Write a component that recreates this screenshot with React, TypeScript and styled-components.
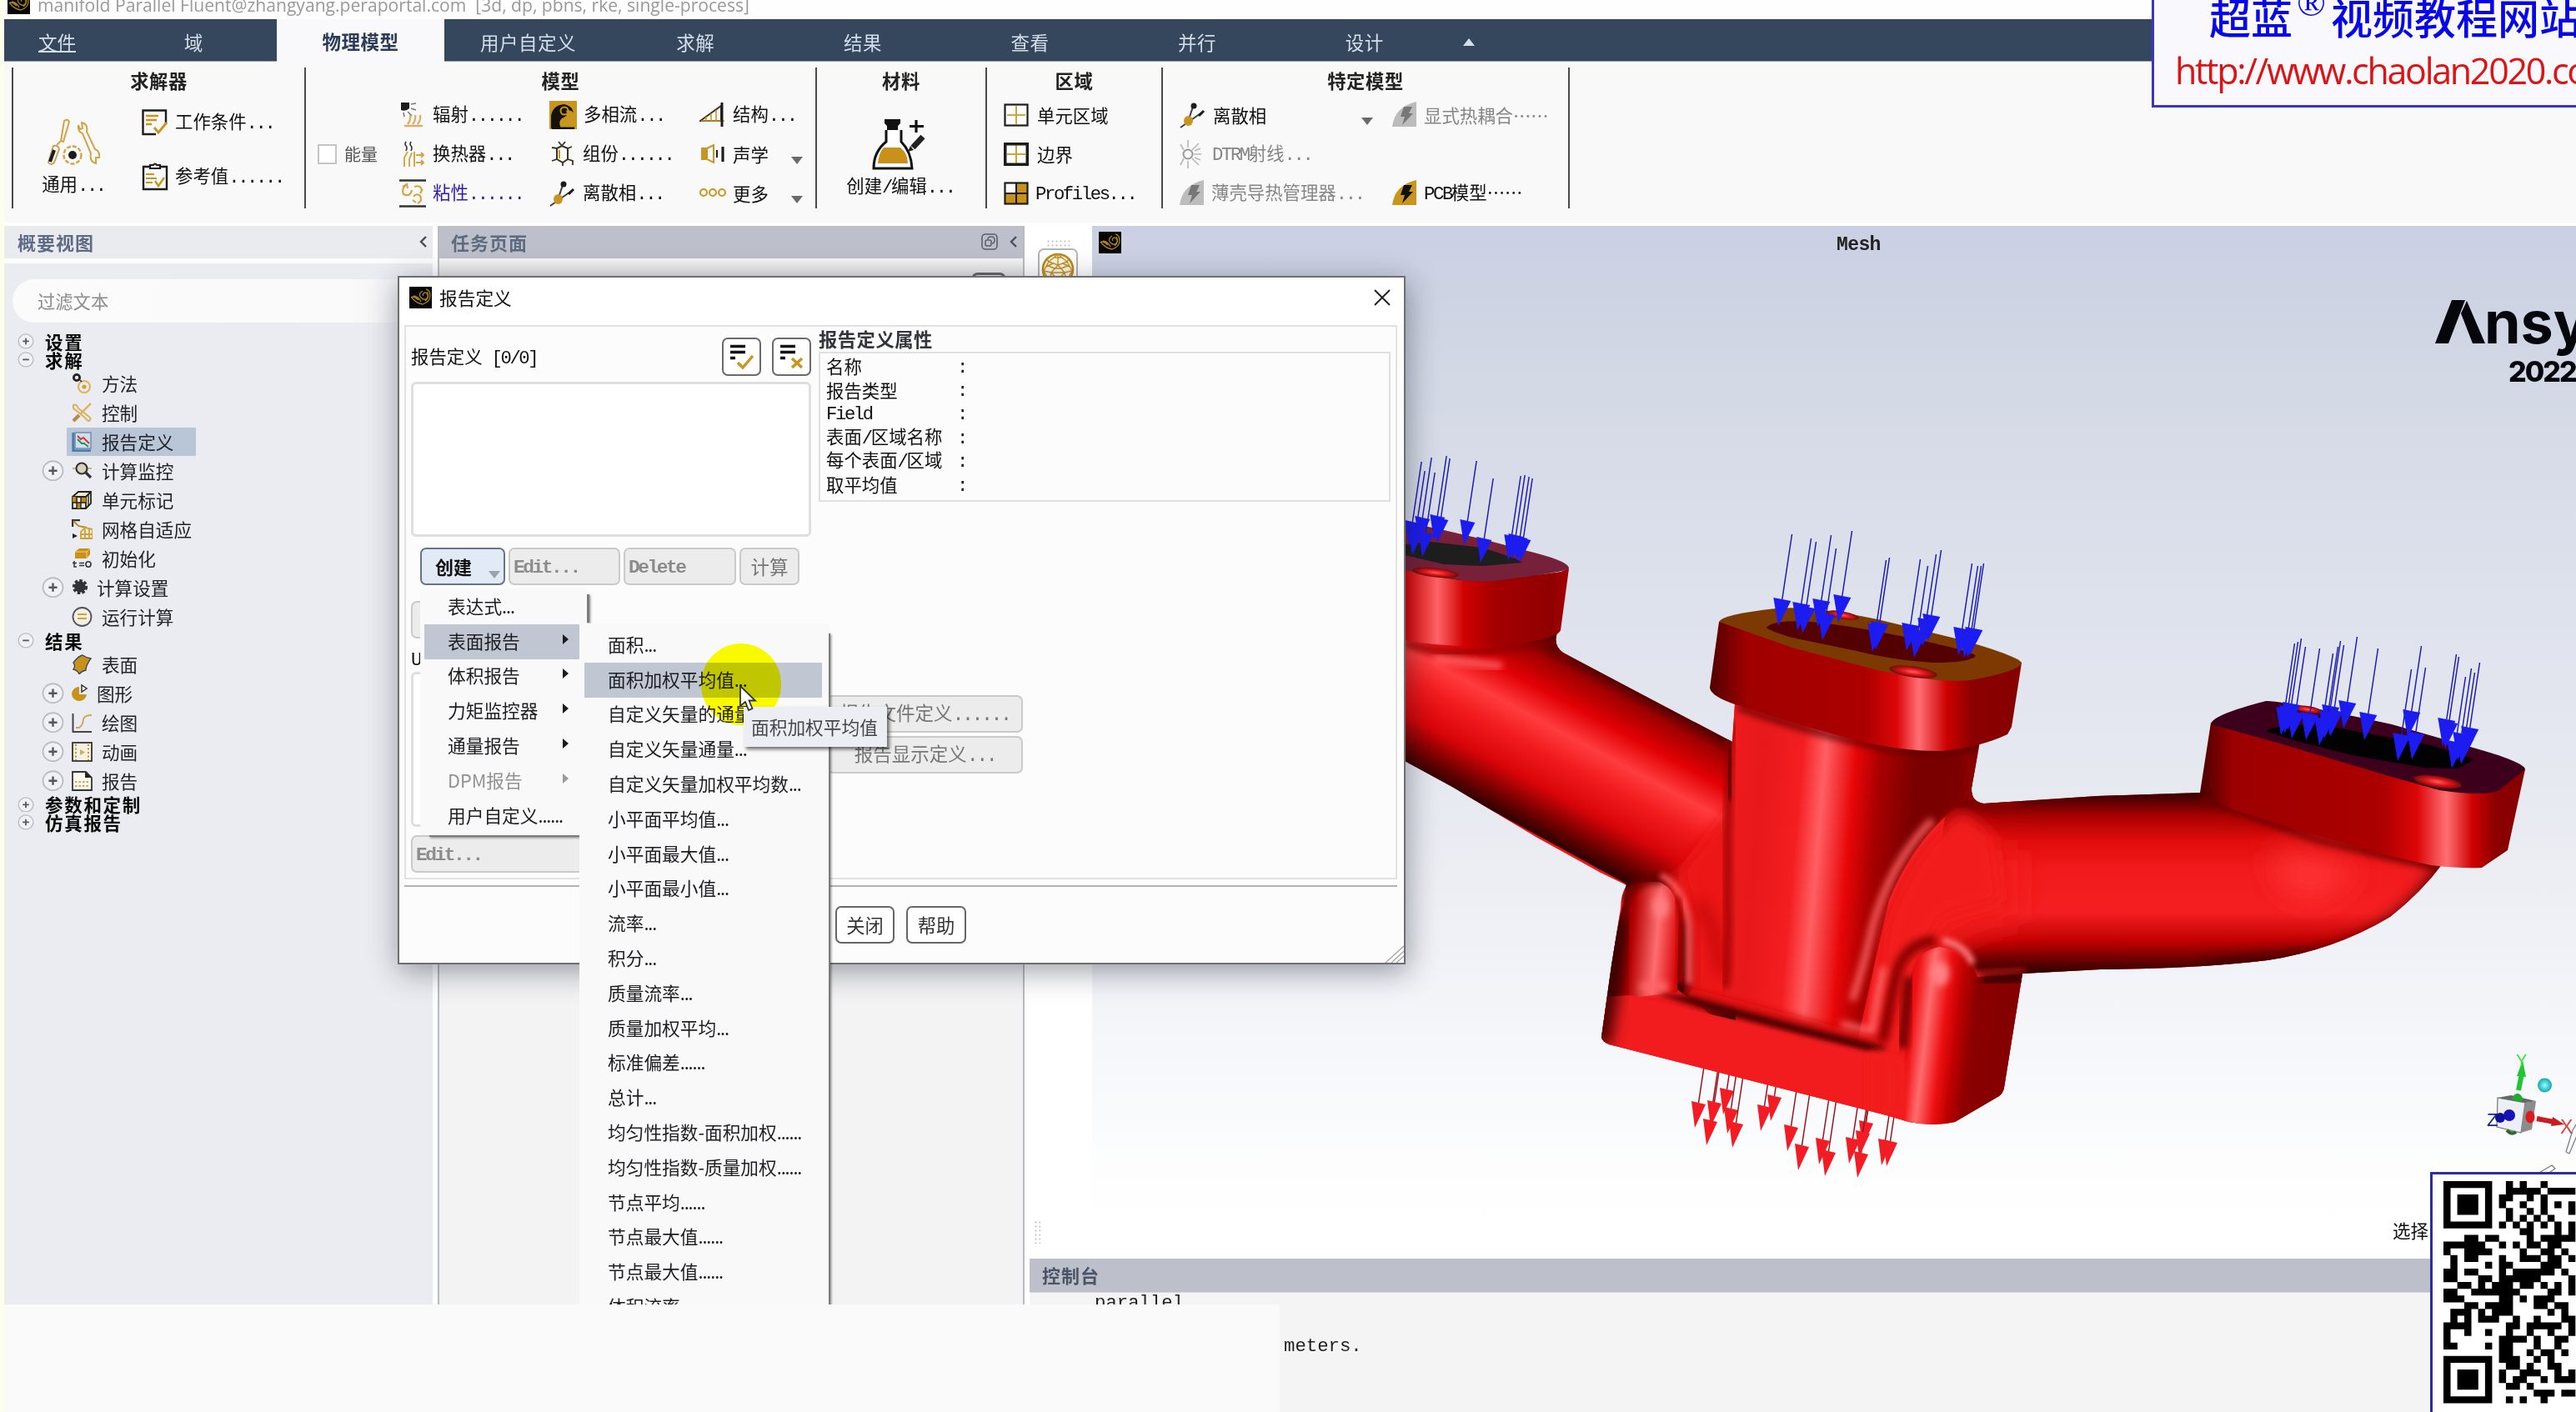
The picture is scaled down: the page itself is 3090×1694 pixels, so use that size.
import React from 'react';
import styled, { createGlobalStyle } from 'styled-components';

const GOLD = '#c8961e';
const INK = '#1c1c1c';
const CJK = '"Noto Sans CJK SC", sans-serif';

const Global = createGlobalStyle`
  * { box-sizing: border-box; }
  html, body { margin: 0; padding: 0; background: #fafafa; }
  body { font-family: "Liberation Sans", ${CJK}; }
`;

/* ---------- text ---------- */

const SongText = styled.span<{ $size?: number; $color?: string; $bold?: boolean; $gap?: number }>`
  font-family: ${CJK};
  font-size: ${p => p.$size ?? 21.4}px;
  font-weight: ${p => (p.$bold ? 700 : 400)};
  color: ${p => p.$color ?? '#111'};
  letter-spacing: ${p => p.$gap ?? 0}px;
  line-height: 24px;
  white-space: pre;
`;
const HalfWidth = styled.span`
  font-family: "Liberation Mono", monospace;
  font-size: 1.04em;
  letter-spacing: -0.108em;
`;
const MenuText = styled.span<{ $color?: string }>`
  font-family: ${CJK};
  font-size: 21.7px;
  line-height: 26px;
  color: ${p => p.$color ?? '#1d1d22'};
  white-space: pre;
`;
const Dots = styled.span`
  letter-spacing: -1.1px;
`;

type SongProps = { children: string; size?: number; color?: string; bold?: boolean; gap?: number };
const Song = ({ children, size, color, bold, gap }: SongProps) => (
  <SongText $size={size} $color={color} $bold={bold} $gap={gap}>
    {children.split(/([\x20-\x7e]+)/).map((part, i) =>
      i % 2 ? <HalfWidth key={i}>{part}</HalfWidth> : part
    )}
  </SongText>
);
const MenuLabel = ({ children, color }: { children: string; color?: string }) => (
  <MenuText $color={color}>
    {children.split(/(\.+)/).map((part, i) => (i % 2 ? <Dots key={i}>{part}</Dots> : part))}
  </MenuText>
);

/* ---------- frame ---------- */

const Page = styled.div`
  position: relative;
  width: 3090px;
  height: 1694px;
  overflow: hidden;
  display: flex;
  flex-direction: column;
  background: #fff;
  border-left: 5px solid #fdffea;
`;
const TitleBar = styled.header`
  height: 23px;
  flex: none;
  display: flex;
  align-items: flex-start;
  gap: 9px;
  padding-left: 4px;
  background: #fefefe;
  overflow: hidden;
`;
const TitleText = styled.span`
  font-family: "Open Sans", sans-serif;
  font-size: 21.1px;
  line-height: 11px;
  color: #9a9a9a;
  white-space: pre;
`;
const TitleIcon = styled.div`
  height: 17px;
  width: 27px;
  overflow: hidden;
  display: flex;
  align-items: flex-end;
`;
const MenuBar = styled.nav`
  height: 51px;
  flex: none;
  display: flex;
  background: #34475d;
  border-bottom: 1px solid #8f9bab;
`;
const Tab = styled.div<{ $w: number; $active?: boolean }>`
  width: ${p => p.$w}px;
  height: 51px;
  display: flex;
  align-items: center;
  justify-content: center;
  padding-top: ${p => (p.$active ? 0 : 3)}px;
  background: ${p => (p.$active ? '#f9f9fb' : 'transparent')};
`;
const Underlined = styled.span`
  border-bottom: 2px solid #d5deea;
  line-height: 22px;
  height: 25px;
`;
const Triangle = styled.i<{ $color: string; $up?: boolean }>`
  width: 0;
  height: 0;
  border: 7px solid transparent;
  ${p => (p.$up ? 'border-bottom' : 'border-top')}: 9px solid ${p => p.$color};
  ${p => (p.$up ? 'border-top' : 'border-bottom')}: 0;
`;

/* ---------- ribbon ---------- */

const Ribbon = styled.section`
  height: 197px;
  flex: none;
  display: flex;
  align-items: flex-start;
  padding: 7px 0 0 9px;
  background: #f9f9fa;
  border-bottom: 4px solid #fff;
`;
const Group = styled.div<{ $w: number; $first?: boolean }>`
  width: ${p => p.$w}px;
  height: 169px;
  border-right: 2px solid #4a4a4a;
  border-left: ${p => (p.$first ? '2px solid #4a4a4a' : '0')};
`;
const GroupTitle = styled.div`
  height: 33px;
  padding-bottom: 3px;
  display: flex;
  align-items: center;
  justify-content: center;
`;
const GroupBody = styled.div<{ $cols?: string; $pad?: number; $rows?: string }>`
  display: grid;
  grid-template-columns: ${p => p.$cols ?? '1fr'};
  grid-template-rows: ${p => p.$rows ?? 'repeat(3, 47px)'};
  grid-auto-flow: column;
  padding-left: ${p => p.$pad ?? 0}px;
`;
const Command = styled.div<{ $gap?: number; $w?: number }>`
  display: flex;
  align-items: center;
  gap: ${p => p.$gap ?? 8}px;
  width: ${p => (p.$w ? p.$w + 'px' : 'auto')};
  white-space: nowrap;
`;
const CaretSlot = styled.span`
  margin-left: auto;
  padding-top: 16px;
  display: flex;
`;
const BigCommand = styled.div<{ $pad: number; $shift: number }>`
  grid-row: 1 / -1;
  display: flex;
  flex-direction: column;
  align-items: center;
  gap: ${p => p.$pad}px;
  padding-top: 28px;
  padding-right: ${p => p.$shift}px;
`;
const Checkbox = styled.span`
  width: 23px;
  height: 24px;
  background: #fff;
  border: 2px solid #c4c4c4;
`;
const Blank = styled.div``;

/* ---------- docked panels ---------- */

const Workspace = styled.main`
  flex: 1;
  min-height: 0;
  display: flex;
`;
const Outline = styled.aside`
  width: 514px;
  background: #ebecf1;
`;
const PanelHeader = styled.div<{ $tone: string; $pad: number; $h: number }>`
  height: ${p => p.$h}px;
  padding: 0 6px 2px ${p => p.$pad}px;
  display: flex;
  align-items: center;
  gap: 14px;
  background: ${p => p.$tone};
`;
const Spacer = styled.span`
  flex: 1;
`;
const WhiteRule = styled.div`
  height: 6px;
  background: #fcfcfd;
`;
const Filter = styled.div`
  height: 52px;
  margin: 19px 0 12px 10px;
  padding-left: 30px;
  display: flex;
  align-items: center;
  border-radius: 26px 0 0 26px;
  background: linear-gradient(90deg, #fbfbfb 0, #fafafa 80%, #ebecf1 100%);
`;
const RootRow = styled.div`
  height: 21.7px;
  display: flex;
  align-items: center;
  padding-left: 16px;
  gap: 13px;

  ${SongText} {
    line-height: 21px;
  }
`;
const LeafRow = styled.div`
  height: 35px;
  display: flex;
  align-items: center;
`;
const ExpandSlot = styled.span`
  width: 75px;
  padding-left: 45px;
  display: flex;
`;
const Leaf = styled.span<{ $on?: boolean; $tight?: boolean }>`
  height: 34px;
  display: flex;
  align-items: center;
  gap: ${p => (p.$tight ? 5 : 11)}px;
  padding: 0 27px 0 6px;
  background: ${p => (p.$on ? '#b9c6d8' : 'transparent')};
`;
const TaskPanel = styled.section`
  width: 704px;
  margin-left: 6px;
  background: #f3f3f4;
  border-left: 2px solid #b9bbc2;
  border-right: 2px solid #b9bbc2;
  box-shadow: 0 0 0 3px #fff;
`;
const TaskBody = styled.div`
  height: 100px;
  background: linear-gradient(#f6f6f6, #e0e0e0 22px, #f3f3f4);
  padding: 17px 20px 0 0;
  display: flex;
  justify-content: flex-end;
`;
const PeekButton = styled.span`
  width: 42px;
  height: 30px;
  border: 3px solid #666;
  border-radius: 8px;
`;
const RightSide = styled.section`
  flex: 1;
  min-width: 0;
  display: flex;
  flex-direction: column;
`;
const ViewRow = styled.div`
  height: 1239px;
  flex: none;
  display: flex;
`;
const ToolColumn = styled.div`
  width: 81px;
  background: #fff;
  display: flex;
  flex-direction: column;
  align-items: center;
  padding: 16px 2px 18px 0;
`;
const DotGrip = styled.div<{ $vertical?: boolean }>`
  width: ${p => (p.$vertical ? 8 : 28)}px;
  height: ${p => (p.$vertical ? 28 : 9)}px;
  margin-right: ${p => (p.$vertical ? 50 : 0)}px;
  background: radial-gradient(circle, #c2c2c2 0.8px, transparent 1.3px) 0 0 / 5px 5px;
`;
const ToolButton = styled.div`
  margin-top: 2px;
  width: 48px;
  height: 60px;
  border: 2px solid #b4b4b4;
  border-radius: 7px;
  display: flex;
  justify-content: center;
  padding-top: 3px;
`;
const Viewport = styled.div`
  flex: 1;
  min-width: 0;
  overflow: hidden;
  background: linear-gradient(#cacfe3 0, #d3d8e5 14%, #dde1ec 35%, #e8eaf1 56%, #f4f6fa 78%, #fefefe 93%, #fff 100%);
`;
const ConsoleHead = styled.div`
  height: 41px;
  flex: none;
  margin-left: 6px;
  padding: 0 0 2px 15px;
  display: flex;
  align-items: center;
  background: #bdc0ca;
  border-bottom: 1px solid #d5d7de;
`;
const ConsoleBody = styled.div`
  flex: 1;
  background: #f4f4f4;
  margin-left: 6px;
  display: flex;
  flex-direction: column;
`;
const ConsoleLine = styled.div<{ $indent: number; $h: number }>`
  height: ${p => p.$h}px;
  padding-left: ${p => p.$indent}px;
  font-family: "Liberation Mono", monospace;
  font-size: 22.3px;
  line-height: 24px;
  color: #222;
`;

/* ---------- dialog ---------- */

const Dialog = styled.div`
  position: absolute;
  left: 472px;
  top: 331px;
  width: 1209px;
  height: 826px;
  display: flex;
  flex-direction: column;
  background: #fcfcfc;
  border: 2px solid #6e6e6e;
  box-shadow: 2px 8px 34px rgba(20, 24, 40, 0.42);
`;
const DialogTitle = styled.div`
  height: 57px;
  flex: none;
  display: flex;
  align-items: center;
  gap: 9px;
  padding: 0 16px 9px 12px;
  background: #fff;
`;
const DialogContent = styled.div`
  height: 665px;
  flex: none;
  margin: 0 8px 0 6px;
  display: flex;
  border: 2px solid #e2e2e2;
`;
const LeftPane = styled.div`
  width: 495px;
  flex: none;
  padding: 13px 9px 0 6px;
  display: flex;
  flex-direction: column;
`;
const ListHead = styled.div`
  height: 46px;
  display: flex;
  align-items: center;
  gap: 13px;
`;
const IconButton = styled.span`
  width: 47px;
  height: 46px;
  display: flex;
  align-items: center;
  justify-content: center;
  background: #fff;
  border: 2px solid #6a6a6a;
  border-radius: 7px;
`;
const ListBox = styled.div<{ $h: number; $top: number }>`
  height: ${p => p.$h}px;
  margin-top: ${p => p.$top}px;
  background: #fff;
  border: 3px solid #dfdfdf;
  border-radius: 6px;
`;
const ButtonRow = styled.div`
  display: flex;
  gap: 4px;
  padding-left: 11px;
  margin-top: 13px;
`;
const Button = styled.span<{ $w: number; $kind?: 'primary' | 'plain'; $pad?: number; $top?: number }>`
  width: ${p => p.$w}px;
  height: 45px;
  margin-top: ${p => p.$top ?? 0}px;
  padding-bottom: 2px;
  padding-left: ${p => p.$pad ?? 0}px;
  display: flex;
  align-items: center;
  justify-content: ${p => (p.$pad ? 'flex-start' : 'center')};
  border-radius: 7px;
  border: 2px solid ${p => (p.$kind === 'primary' ? '#66748a' : p.$kind === 'plain' ? '#666' : '#cacaca')};
  background: ${p => (p.$kind === 'primary' ? '#e2eaf6' : p.$kind === 'plain' ? '#fff' : '#ececec')};
`;
const ButtonCaret = styled.span`
  margin: 22px 0 0 20px;
  display: flex;
`;
const UsedIn = styled.div`
  height: 40px;
  display: flex;
  align-items: center;
  padding-top: 8px;
`;
const RightPane = styled.div`
  flex: 1;
  padding: 2px 6px 0 0;
`;
const Properties = styled.div`
  height: 180px;
  margin-top: 2px;
  padding: 1px 0 0 7px;
  border: 2px solid #e0e0e0;
`;
const PropertyRow = styled.div`
  height: 28.4px;
  display: grid;
  grid-template-columns: 157px 1fr;
  align-items: center;
`;
const ActionStack = styled.div`
  margin: 232px 0 0 10px;
  display: flex;
  flex-direction: column;
  gap: 4px;
`;
const DialogFooter = styled.div`
  flex: 1;
  margin: 7px 8px 0 6px;
  border-top: 2px solid #b2b2b2;
  padding: 23px 0 0 517px;
  display: flex;
  gap: 14px;
`;
const Grip = styled.svg`
  position: absolute;
  right: 0;
  bottom: 0;
`;

/* ---------- popups ---------- */

const Popup = styled.div<{ $x: number; $y: number; $w: number; $h: number; $pad: number }>`
  position: absolute;
  left: ${p => p.$x}px;
  top: ${p => p.$y}px;
  width: ${p => p.$w}px;
  height: ${p => p.$h}px;
  padding-top: ${p => p.$pad}px;
  overflow: hidden;
  background: #f9f9fa;
`;
const PopupShadow = styled.div<{ $x: number; $y: number; $w: number; $h: number }>`
  position: absolute;
  left: ${p => p.$x}px;
  top: ${p => p.$y}px;
  width: ${p => p.$w}px;
  height: ${p => p.$h}px;
  background: #7c7c7c;
  box-shadow: 1px 1px 3px rgba(0, 0, 0, 0.5);
`;
const MenuItem = styled.div<{ $pad: number; $ml: number; $mr: number; $on?: boolean }>`
  height: 41.8px;
  margin: 0 ${p => p.$mr}px 0 ${p => p.$ml}px;
  padding: 0 17px 2px ${p => p.$pad}px;
  display: flex;
  align-items: center;
  justify-content: space-between;
  background: ${p => (p.$on ? '#c0c6d2' : 'transparent')};
`;
const SubArrow = styled.i<{ $off?: boolean }>`
  margin-top: -4px;
  border: 6.5px solid transparent;
  border-left: 7px solid ${p => (p.$off ? '#9a9a9a' : '#1c1c1c')};
  border-right: 0;
`;
const Halo = styled.div`
  position: absolute;
  left: 836px;
  top: 772px;
  width: 96px;
  height: 98px;
  border-radius: 50%;
  background: #ffff00;
  mix-blend-mode: multiply;
`;
const Tooltip = styled.div`
  position: absolute;
  left: 887px;
  top: 848px;
  width: 172px;
  height: 48px;
  display: flex;
  align-items: center;
  padding-left: 9px;
  background: #eceef3;
  box-shadow: 3px 3px 4px rgba(0, 0, 0, 0.55);
`;
const Cursor = styled.svg`
  position: absolute;
  left: 881px;
  top: 821px;
`;
const BlankCover = styled.div`
  position: absolute;
  left: -5px;
  top: 1565px;
  width: 1535px;
  height: 129px;
  background: #fafafa;
`;
const SiteBadge = styled.div`
  position: absolute;
  left: 2576px;
  top: -14px;
  width: 560px;
  height: 143px;
  background: #f8f8fd;
  border: 3px solid #3c34c4;
  overflow: hidden;
`;
const SiteName = styled.div`
  height: 69px;
  padding: 0 0 0 66px;
  font-family: ${CJK};
  font-size: 50px;
  line-height: 60px;
  font-weight: 500;
  color: #0808e6;
  white-space: nowrap;
  display: flex;
`;
const Registered = styled.sup`
  font-family: "Liberation Serif", serif;
  font-size: 46px;
  line-height: 30px;
  width: 46px;
  text-indent: 5px;
`;
const SiteUrl = styled.div`
  padding-left: 25px;
  font-family: "Open Sans", sans-serif;
  font-size: 43px;
  line-height: 54px;
  letter-spacing: -2.3px;
  color: #dc1414;
  white-space: nowrap;
`;
const QrCard = styled.div`
  position: absolute;
  left: 2910px;
  top: 1406px;
  width: 200px;
  height: 300px;
  padding: 8px 0 0 13px;
  background: #fff;
  border: 3px solid #2a2f9e;
`;
const PickLabel = styled.div`
  position: absolute;
  left: 2865px;
  top: 1464px;
`;

/* ---------- small icons ---------- */

const Glyph = styled.svg`
  flex: none;
`;
type IconProps = { w: number; h: number; children: React.ReactNode };
const Ico = ({ w, h, children }: IconProps) => (
  <Glyph width={w} height={h} viewBox={`0 0 ${w} ${h}`} fill="none">
    {children}
  </Glyph>
);

const FluentIcon = () => (
  <Ico w={27} h={26}>
    <rect width="27" height="26" fill="#070503" />
    <path d="M2 12q6 8 14 9q9-3 9-10q0-7-5-8M3 12q4 0 8 4M5 11q6 1 9 7M16 5q-6 4-2 8t7 1q3-5-2-7q-4 1-2 4M21 6q4 6-2 11" stroke="#a8821c" strokeWidth="1.3" />
  </Ico>
);
const ToolsIcon = () => (
  <Ico w={66} h={58}>
    <path d="M22 3q4-3 6 1l-7 24l-3-1zM18 27l-5 5" stroke="#d3a445" strokeWidth="2" />
    <path d="M9 33q6-1 7 4l-6 16q-4 4-7 0z" stroke="#c9a35a" strokeWidth="2" />
    <path d="M10 38l-5 14" stroke={INK} strokeWidth="4" />
    <path d="M39 8q-1 8 5 10l10 24q-2 10 6 12l0-7 4 0q1-8-5-10l-10-21q2-9-6-11l1 7-3 1z" stroke="#d3a445" strokeWidth="2" />
    <circle cx="32" cy="44" r="10.5" stroke="#d3a445" strokeWidth="2.4" strokeDasharray="5 2" />
    <circle cx="32" cy="44" r="5" fill={INK} />
  </Ico>
);
const ConditionsIcon = () => (
  <Ico w={32} h={32}>
    <path d="M29 17V1.500H1.500V30H17" stroke={INK} strokeWidth="2.400" />
    <path d="M5 8H20M5 13H18M5 18H12" stroke={GOLD} strokeWidth="2.600" />
    <path d="M15 22l5 6 10-12" stroke={GOLD} strokeWidth="3" />
  </Ico>
);
const ReferenceIcon = () => (
  <Ico w={32} h={34}>
    <path d="M2 5H30V32H2z" stroke={INK} strokeWidth="2.400" />
    <path d="M10 7V3h4q2-3 4 0h4v4z" fill="#fff" stroke={INK} strokeWidth="2.200" />
    <path d="M5 14H15M5 19H18M5 24H13" stroke={GOLD} strokeWidth="1.800" />
    <path d="M16 22l4 6 7-10" stroke={GOLD} strokeWidth="2.400" />
  </Ico>
);
const RadiationIcon = () => (
  <Ico w={32} h={32}>
    <path d="M2 1H12V8Q8 12 2 10z" fill={INK} />
    <path d="M14 3l6-1M14 8l6 2M10 12l5 5M5 13l1 5" stroke="#777" strokeWidth="1.500" />
    <path d="M6 29H28M10 27q4-5 3-11M16 27q4-5 3-11M22 27q4-5 3-11" stroke="#dcb066" strokeWidth="2.400" />
  </Ico>
);
const ExchangerIcon = () => (
  <Ico w={32} h={32}>
    <path d="M8 1q-2 3 0 5t0 6M14 1q-2 3 0 5t0 6" stroke="#333" strokeWidth="1.600" />
    <path d="M6 31V20l4-7M12 31V22l3-8M18 31V13M20 17H29M20 26H29M26 14l3 3-3 3M26 23l3 3-3 3" stroke="#d3a445" strokeWidth="1.900" />
  </Ico>
);
const ViscousIcon = () => (
  <Ico w={32} h={34}>
    <path d="M0 1.500H32M0 32.500H32" stroke="#333" strokeWidth="2.400" />
    <path d="M8 7Q2 12 5 18q8 4 10-5M4 9l5-3 1 5M18 9q8-3 9 5M28 12l-3 5M17 21q3-5 8-1q3 6-3 9M16 25l4 3" stroke="#d3a445" strokeWidth="2.100" />
  </Ico>
);
const MultiphaseIcon = () => (
  <Ico w={33} h={34}>
    <rect width="33" height="34" fill={GOLD} />
    <path d="M2 30V18Q4 5 18 4q9 2 11 10q-4-4-9-2q4 6-5 9q-5 4-1 12H2z" fill="#15120a" />
    <circle cx="18" cy="12" r="4.500" fill="none" stroke={GOLD} strokeWidth="2" />
    <path d="M3 33H30" stroke="#15120a" strokeWidth="3" />
  </Ico>
);
const SpeciesIcon = () => (
  <Ico w={32} h={32}>
    <path d="M9 9L15 6L22 9V22L16 26L9 22z" stroke="#3a3320" strokeWidth="2" />
    <path d="M12 11v10" stroke={GOLD} strokeWidth="2" />
    <path d="M15 6L11 1M15 6l4-5M9 9L3 8M22 9l5-2M9 22l-6 2M22 22l6 2v5M16 26v4" stroke="#3a3320" strokeWidth="1.800" />
  </Ico>
);
const DiscreteIcon = () => (
  <Ico w={32} h={32}>
    <path d="M1 31L28 12M10 24L17 3" stroke="#3c3c3c" strokeWidth="2" />
    <circle cx="17" cy="5" r="3.500" fill={INK} />
    <path d="M23 17l6-6" stroke={INK} strokeWidth="3" />
    <ellipse cx="10.500" cy="23" rx="5.500" ry="6" fill={GOLD} />
  </Ico>
);
const StructureIcon = () => (
  <Ico w={32} h={32}>
    <path d="M1 23L26 5V23z" stroke="#3a3320" strokeWidth="2" />
    <path d="M8 23v-5M14 23V14M20 23V10M2 23H30" stroke={GOLD} strokeWidth="1.600" />
    <path d="M27 1V30" stroke={INK} strokeWidth="3" />
  </Ico>
);
const AcousticsIcon = () => (
  <Ico w={32} h={32}>
    <path d="M2 8H8V23H2z" fill={GOLD} />
    <path d="M9 9L17 5V26L9 22z" stroke={GOLD} strokeWidth="2" />
    <path d="M21 11V20" stroke={INK} strokeWidth="2" />
    <path d="M28 7V25" stroke={INK} strokeWidth="3.200" />
  </Ico>
);
const MoreIcon = () => (
  <Ico w={32} h={32}>
    <circle cx="5" cy="15" r="4" stroke={GOLD} strokeWidth="2" />
    <circle cx="16" cy="15" r="4" stroke={GOLD} strokeWidth="2" />
    <circle cx="27" cy="15" r="4" stroke={GOLD} strokeWidth="2" />
  </Ico>
);
const FlaskIcon = () => (
  <Ico w={68} h={62}>
    <path d="M15 1H34V6L31 9V14H18V9L15 6z" fill="#111" />
    <path d="M17 14V28Q2 40 2 60H48Q47 40 35 28V14" fill="#fff" stroke="#111" strokeWidth="3" />
    <path d="M14 35H34Q43 42 43 54H7Q8 42 14 35z" fill="#c8921a" />
    <path d="M53 2V17M45 9.500H62" stroke="#111" strokeWidth="3.200" />
    <path d="M49 35L61 22" stroke="#222" strokeWidth="7" />
    <path d="M43 40l3-7 4 5z" fill="#222" />
  </Ico>
);
const GridIcon = ({ kind }: { kind: 'zone' | 'boundary' | 'profile' }) => (
  <Ico w={30} h={28}>
    <rect x="1.500" y="1.500" width="27" height="25" fill="#fff" />
    {kind === 'profile' && <path d="M15 1H29V27H1V14H15z" fill="#c8921a" />}
    <path d={kind === 'profile' ? 'M15 2V26M2 14H28' : 'M15 3V25M4 14H26'} stroke={kind === 'profile' ? INK : '#d0a63c'} strokeWidth="2" />
    <rect x="1.500" y="1.500" width="27" height="25" stroke={INK} strokeWidth={kind === 'boundary' ? 4 : 2.200} />
  </Ico>
);
const RaysIcon = () => (
  <Ico w={31} h={34}>
    <circle cx="10" cy="17" r="5.500" stroke="#999" strokeWidth="2" />
    <path d="M10 9V0M10 25v9M15 12l8-8M15 22l8 8M17 17H26M5 12L1 5M5 22l-4 8M18 13l7-3M18 21l7 3" stroke="#b9b9b9" strokeWidth="1.700" />
  </Ico>
);
const BoltIcon = ({ on }: { on?: boolean }) => (
  <Ico w={30} h={31}>
    <path d="M0 30Q3 6 29 0V30z" fill={on ? GOLD : '#bcbcbc'} />
    <path d="M14 6H24L20 14H25L12 28L15 18H10z" fill={on ? '#111' : '#777'} />
  </Ico>
);
const Expander = ({ size, plus }: { size: number; plus?: boolean }) => (
  <Glyph width={size} height={size * 0.94} viewBox="0 0 26 25">
    <ellipse cx="13" cy="12.500" rx="11.800" ry="11.300" fill="#f0f1f4" stroke="#b9bcc2" strokeWidth="1.800" />
    <path d={plus ? 'M8 12.500H18M13 7.500V17.500' : 'M8 12.500H18'} stroke="#55585e" strokeWidth="2.400" />
  </Glyph>
);
const ChevronLeft = () => (
  <Ico w={10} h={18}>
    <path d="M8 3L2 9L8 15" stroke="#4a4f58" strokeWidth="2.400" />
  </Ico>
);
const FloatIcon = () => (
  <Ico w={20} h={20}>
    <rect x="1" y="1" width="18" height="18" rx="4" stroke="#5a606b" strokeWidth="1.600" />
    <rect x="5" y="8" width="7" height="7" rx="2" stroke="#5a606b" strokeWidth="1.500" />
    <path d="M8 7q0-3 4-3q4 0 4 4q0 4-3 4" stroke="#5a606b" strokeWidth="1.500" />
  </Ico>
);
const MeshBall = () => (
  <Ico w={40} h={40}>
    <circle cx="20" cy="20" r="18" fill="#fdf6e2" stroke="#b98a1d" strokeWidth="2.600" />
    <path d="M20 2L9 11L20 15L31 11zM9 11L3 22L12 24L20 15L28 24L37 22L31 11M12 24L20 33L28 24zM3 22L10 34L12 24M37 22L30 34L28 24M10 34L20 33L30 34M7 8l2 3M33 8l-2 3M12 24H28M20 2V15M14 13L6 17M26 13L34 17M15 6L25 6M16 19H24M6 15L16 19M34 15L24 19" stroke="#c2922a" strokeWidth="1.400" />
  </Ico>
);
const ListCheck = ({ cross }: { cross?: boolean }) => (
  <Ico w={32} h={32}>
    <path d="M2 3.500H20M2 10.500H20M2 17.500H8" stroke="#111" strokeWidth="3.600" />
    {cross ? (
      <path d="M16 18L28 29M28 18L16 29" stroke={GOLD} strokeWidth="3.600" />
    ) : (
      <path d="M11 23L17 29L29 15" stroke={GOLD} strokeWidth="3.400" />
    )}
  </Ico>
);

const treeIcons: Record<string, React.ReactNode> = {
  method: (
    <>
      <circle cx="6" cy="5" r="3.600" stroke="#222" strokeWidth="2.800" />
      <circle cx="15" cy="16" r="7" stroke="#e0b35c" strokeWidth="2.200" />
      <circle cx="15" cy="16" r="2.600" fill="#d79f2c" />
      <path d="M10 8l2 2" stroke="#222" strokeWidth="1.500" />
    </>
  ),
  control: (
    <>
      <path d="M2 3q4-2 6 4l13 10q3 2 0 5q-3 0-4-3L5 9q-4-1-3-6z" stroke="#dcae56" strokeWidth="1.900" />
      <path d="M23 1L10 14" stroke="#dcae56" strokeWidth="2.400" />
      <path d="M9 15L2 22" stroke="#b58a45" strokeWidth="4" />
    </>
  ),
  report: (
    <>
      <path d="M2 1V23H23" stroke="#4c7fae" strokeWidth="3.400" />
      <rect x="4" y="1" width="19" height="19" fill="#d4dee9" stroke="#6d8fb3" strokeWidth="1.500" />
      <path d="M7 5l4 4 3-2 7 7" stroke="#c33" strokeWidth="1.800" />
      <path d="M7 9l5 5 3 0 5 4" stroke="#2a8f5a" strokeWidth="1.800" />
    </>
  ),
  monitor: (
    <>
      <path d="M1 9H24" stroke="#c9a35a" strokeWidth="1.500" />
      <circle cx="12" cy="9" r="6.500" fill="#d9d2c0" stroke="#333" strokeWidth="2.200" />
      <path d="M17 14l6 6" stroke="#333" strokeWidth="3.200" />
    </>
  ),
  cell: (
    <>
      <path d="M1 8L8 2H23V16L17 22H1z" fill="#f4ead0" stroke="#222" strokeWidth="1.800" />
      <path d="M1 8H17V22M17 8L23 2" stroke="#222" strokeWidth="1.800" />
      <path d="M1 8H7V15H1zM11 9H17V15H11zM6 15H11V22H6z" fill="#b98a1d" />
      <path d="M6 8V22M11 8V22M1 15H17M20 5V19" stroke="#222" strokeWidth="1.400" />
    </>
  ),
  adapt: (
    <>
      <path d="M1 9V1H10" stroke="#333" strokeWidth="2.400" />
      <path d="M2 2L8 8L18 10" stroke="#b98a1d" strokeWidth="1.800" />
      <path d="M1 17l6 3-6 3z" fill="#222" />
      <path d="M11 23V15L16 10L25 12V23H11zM11 18H25M16 12V23M21 12V23" stroke="#d79f2c" strokeWidth="1.800" />
    </>
  ),
  init: (
    <>
      <path d="M4 4L9 0H22V7L18 12H4z" fill="#c8921a" />
      <path d="M4 4H18V12M18 4l4-4" stroke="#f3d58a" strokeWidth="1" />
      <path d="M3 15V22H6M1 17.500H6M9 17.500H15M9 20.500H15" stroke="#333" strokeWidth="1.500" />
      <ellipse cx="20" cy="19" rx="3" ry="3.200" stroke="#333" strokeWidth="1.600" />
    </>
  ),
  gear: (
    <>
      <circle cx="10" cy="11" r="7.600" stroke="#2f3238" strokeWidth="3" strokeDasharray="3.600 2.200" />
      <circle cx="10" cy="11" r="6.800" fill="#2f3238" />
    </>
  ),
  run: (
    <>
      <circle cx="12.500" cy="12" r="11" fill="#f3efe2" stroke="#4d545e" strokeWidth="1.800" />
      <path d="M7 9H18M7 14H18" stroke="#d0a63c" strokeWidth="2" />
    </>
  ),
  surface: (
    <path d="M2 10Q8 2 13 1Q17 4 23 5Q17 13 17 19Q12 20 9 24Q7 19 2 18Q5 14 2 10z" fill="#c8921a" stroke="#3c4658" strokeWidth="1.300" />
  ),
  graphics: (
    <>
      <path d="M9 4A9 8.500 0 1 0 18 13H9z" fill="#c8921a" />
      <path d="M12 2V10L18 6z" fill="#fff" stroke="#333" strokeWidth="1.500" />
    </>
  ),
  plot: (
    <>
      <path d="M1.500 1V23H24" stroke="#444" strokeWidth="2" />
      <path d="M5 18H9Q13 16 14 8Q15 3 24 3" stroke="#c8a95a" strokeWidth="2" />
    </>
  ),
  anim: (
    <>
      <rect x="1" y="1" width="23" height="22" fill="#f6f1e0" stroke="#333" strokeWidth="1.800" />
      <path d="M5 3V22M20 3V22" stroke="#b98a1d" strokeWidth="1.800" strokeDasharray="2 2.500" />
      <path d="M10 9l6 3.500-6 3.500z" fill="#c8b060" />
    </>
  ),
  doc: (
    <>
      <path d="M1 1H17L24 8V23H1z" fill="#faf7ec" stroke="#333" strokeWidth="1.800" />
      <path d="M16 1V8H24z" fill="#222" />
      <path d="M4 13H21M4 18H21" stroke="#c8a95a" strokeWidth="1.800" strokeDasharray="2.500 2" />
    </>
  ),
};

/* ---------- 3D scene ---------- */

type Pt = [number, number];
const inletArrows: Pt[] = [
  [2133, 751], [2162, 760], [2156, 756], [2186, 768], [2205, 747], [2180, 752], [2246, 782], [2250, 779], [2287, 781], [2296, 789],
  [2312, 770], [2306, 775], [2349, 786], [2356, 789], [2360, 789], [2363, 786],
  [1694, 666], [1706, 668], [1690, 655], [1702, 650], [1724, 651], [1720, 648], [1756, 654], [1776, 675], [1809, 672], [1814, 671], [1823, 675], [1819, 673],
  [2736, 882], [2740, 880], [2749, 886], [2766, 888], [2782, 894], [2791, 879], [2795, 884], [2811, 874], [2836, 888], [2876, 913],
  [2888, 885], [2893, 911], [2930, 895], [2933, 898], [2941, 922], [2952, 917], [2948, 912], [2958, 905], [2744, 876], [2788, 886],
];
const outletArrows: Pt[] = [
  [2033, 1353], [2047, 1374], [2052, 1352], [2067, 1337], [2072, 1360], [2078, 1377], [2112, 1357], [2124, 1345], [2144, 1381],
  [2157, 1404], [2182, 1397], [2189, 1411], [2218, 1396], [2228, 1413], [2234, 1376], [2230, 1388], [2257, 1398], [2263, 1399],
];
const Arrow = ({ p, len, half, head, color, shaft }: { p: Pt; len: number; half: number; head: number; color: string; shaft: string }) => {
  const [x, y] = p;
  const k = 0.15;
  return (
    <g>
      <path d={`M${x + len * k} ${y - len}L${x + head * k} ${y - head}`} stroke={shaft} strokeWidth="1.500" />
      <path d={`M${x} ${y}L${x + head * k - half} ${y - head - 2}L${x + head * k + half} ${y - head + 2}z`} fill={color} />
    </g>
  );
};

const BODY =
  'M1685 684V913L1742 944L1844 1005L1920 1047L1951 1062Q1944 1074 1944 1090L1933 1158L1921 1244Q1921 1249 1930 1253L2263 1338L2290 1346Q2320 1352 2345 1346L2398 1315Q2403 1311 2404 1305L2426 1168L2520 1163Q2640 1162 2720 1152Q2800 1140 2867 1100Q2905 1070 2930 1036L2850 950L2638 951L2515 955L2380 964Q2364 962 2365 945L2375 890L2081 844L2078 890L1960 828L1875 783Q1864 775 1867 763L1878 690z';

const Scene = () => (
  <svg width="1780" height="1239" viewBox="1310 271 1780 1239" fill="none">
    <defs>
      <linearGradient id="pipeL" gradientUnits="userSpaceOnUse" x1="1978" y1="832" x2="1876" y2="1022">
        <stop offset="0" stopColor="#3a0000" /><stop offset=".1" stopColor="#a00000" /><stop offset=".26" stopColor="#e20004" />
        <stop offset=".42" stopColor="#ff3c3e" /><stop offset=".56" stopColor="#f21c1e" /><stop offset=".74" stopColor="#d80508" />
        <stop offset=".9" stopColor="#6a0000" /><stop offset="1" stopColor="#240000" />
      </linearGradient>
      <linearGradient id="pipeR" gradientUnits="userSpaceOnUse" x1="0" y1="953" x2="0" y2="1168">
        <stop offset="0" stopColor="#3a0000" /><stop offset=".12" stopColor="#a80000" /><stop offset=".26" stopColor="#e00c0c" />
        <stop offset=".42" stopColor="#f21a1c" /><stop offset=".66" stopColor="#f41e20" /><stop offset=".82" stopColor="#c00000" />
        <stop offset="1" stopColor="#2c0000" />
      </linearGradient>
      <linearGradient id="neck" gradientUnits="userSpaceOnUse" x1="2072" y1="0" x2="2375" y2="26">
        <stop offset="0" stopColor="#4a0000" /><stop offset=".07" stopColor="#c80000" /><stop offset=".16" stopColor="#f41e20" />
        <stop offset=".4" stopColor="#e8181a" /><stop offset=".55" stopColor="#f41e20" /><stop offset=".64" stopColor="#ff6064" />
        <stop offset=".76" stopColor="#e80608" /><stop offset=".86" stopColor="#a80000" /><stop offset="1" stopColor="#7a0000" />
      </linearGradient>
      <linearGradient id="collarL" gradientUnits="userSpaceOnUse" x1="1685" y1="0" x2="1882" y2="0">
        <stop offset="0" stopColor="#d80000" /><stop offset=".2" stopColor="#ff6468" /><stop offset=".36" stopColor="#d00000" />
        <stop offset=".55" stopColor="#a40000" /><stop offset=".9" stopColor="#900000" /><stop offset="1" stopColor="#a80000" />
      </linearGradient>
      <linearGradient id="collarM" gradientUnits="userSpaceOnUse" x1="2051" y1="0" x2="2425" y2="0">
        <stop offset="0" stopColor="#500000" /><stop offset=".12" stopColor="#a00000" /><stop offset=".5" stopColor="#ac0000" />
        <stop offset=".6" stopColor="#dc0608" /><stop offset=".67" stopColor="#ff7074" /><stop offset=".76" stopColor="#cc0000" />
        <stop offset=".84" stopColor="#8c0000" /><stop offset="1" stopColor="#860000" />
      </linearGradient>
      <linearGradient id="collarR" gradientUnits="userSpaceOnUse" x1="2639" y1="0" x2="3028" y2="0">
        <stop offset="0" stopColor="#480000" /><stop offset=".1" stopColor="#9c0000" /><stop offset=".56" stopColor="#ac0000" />
        <stop offset=".67" stopColor="#dc0608" /><stop offset=".76" stopColor="#ff7074" /><stop offset=".84" stopColor="#d00000" />
        <stop offset=".91" stopColor="#8c0000" /><stop offset="1" stopColor="#860000" />
      </linearGradient>
      <linearGradient id="postL" gradientUnits="userSpaceOnUse" x1="1938" y1="1100" x2="2016" y2="1107">
        <stop offset="0" stopColor="#3c0000" /><stop offset=".28" stopColor="#b40000" /><stop offset=".66" stopColor="#ff6e70" />
        <stop offset="1" stopColor="#d80406" />
      </linearGradient>
      <linearGradient id="postR" gradientUnits="userSpaceOnUse" x1="2278" y1="1200" x2="2412" y2="1216">
        <stop offset="0" stopColor="#d00406" /><stop offset=".14" stopColor="#f01214" /><stop offset=".27" stopColor="#ff6c6e" />
        <stop offset=".42" stopColor="#ee1012" /><stop offset=".54" stopColor="#c00000" /><stop offset=".68" stopColor="#8c0000" />
        <stop offset="1" stopColor="#840000" />
      </linearGradient>
      <radialGradient id="bolt"><stop offset="0" stopColor="#ff5c5e" /><stop offset=".5" stopColor="#e01418" /><stop offset="1" stopColor="#700c08" /></radialGradient>
      <radialGradient id="cyan"><stop offset="0" stopColor="#9ff" /><stop offset="1" stopColor="#10a8b0" /></radialGradient>
      <filter id="b3" x="-50%" y="-50%" width="200%" height="200%"><feGaussianBlur stdDeviation="3" /></filter>
      <filter id="b4" x="-50%" y="-50%" width="200%" height="200%"><feGaussianBlur stdDeviation="4.500" /></filter>
      <filter id="b9" x="-50%" y="-50%" width="200%" height="200%"><feGaussianBlur stdDeviation="9" /></filter>
      <filter id="b18" x="-50%" y="-50%" width="200%" height="200%"><feGaussianBlur stdDeviation="18" /></filter>
      <clipPath id="bodyClip"><path d={BODY} /></clipPath>
    </defs>

    <g transform="translate(1318 278)">
      <FluentIcon />
    </g>
    <text x="2203" y="300" fontFamily="Liberation Mono, monospace" fontWeight="700" fontSize="23" letterSpacing="-0.6" fill="#222">Mesh</text>

    {outletArrows.map((p, i) => (
      <Arrow key={i} p={p} len={100} half={8.500} head={30} color="#f21c24" shaft="#9a1018" />
    ))}

    <g clipPath="url(#bodyClip)">
      <rect x="1685" y="640" width="1300" height="760" fill="#ee181a" />
      <path d="M1685 690L1880 690L2082 890V1240L1950 1140V1060L1685 915z" fill="url(#pipeL)" />
      <path d="M1996 1062L2020 1040L2080 980V1210H2026L2024 1110z" fill="#ea1416" filter="url(#b9)" />
      <path d="M2016 1046L2084 960V1206H2034V1100z" fill="#ec1618" filter="url(#b9)" />
      <path d="M2340 940H2990V1180H2300z" fill="url(#pipeR)" />
      <path d="M2372 1020Q2330 1050 2290 1110L2250 1240L2310 1160L2366 1120L2420 1106V1020z" fill="#f21c1e" filter="url(#b18)" />
      <path d="M2074 840H2380L2366 955Q2300 996 2266 1080L2250 1150L2228 1250L2070 1206z" fill="url(#neck)" />
      <path d="M2352 972Q2290 1030 2262 1110L2246 1240L2280 1180L2330 1100L2400 1080L2390 1000z" fill="#f21c1e" filter="url(#b9)" />
      <path d="M2362 900V956Q2372 966 2420 964" stroke="#8a0000" strokeWidth="16" filter="url(#b4)" />
      <path d="M2078 866Q2070 980 2073 1110L2070 1186" stroke="#9a0000" strokeWidth="8" filter="url(#b4)" />
      <path d="M2076 870L2074 960" stroke="#4a0000" strokeWidth="9" filter="url(#b4)" />
      <path d="M2036 1080Q2058 1110 2066 1170" stroke="#b80000" strokeWidth="10" filter="url(#b9)" />
      <path d="M2318 984Q2268 1034 2246 1112Q2238 1150 2222 1200" stroke="#ff6264" strokeWidth="8" filter="url(#b4)" />

      <path d="M1951 1066Q1966 1056 1990 1058Q2012 1066 2014 1100L2012 1190L1966 1196L1921 1262L1915 1230z" fill="url(#postL)" />
      <path d="M1947 1080Q1962 1052 1996 1056" stroke="#6a0000" strokeWidth="10" filter="url(#b4)" />
      <path d="M1992 1050Q2020 1062 2026 1110V1180" stroke="#ff6264" strokeWidth="6" filter="url(#b3)" />
      <path d="M2012 1076Q2018 1100 2016 1180" stroke="#b40000" strokeWidth="7" filter="url(#b3)" />
      <ellipse cx="1992" cy="1088" rx="10" ry="14" fill="#ff7e80" filter="url(#b4)" />
      <ellipse cx="1984" cy="1184" rx="18" ry="7" fill="#ff6466" filter="url(#b4)" />

      <path d="M2030 1186L2250 1244L2262 1262L2020 1200z" fill="#d80a0c" filter="url(#b4)" />
      <path d="M1956 1194L2285 1272L2310 1366L1900 1264L1915 1196z" fill="#f21c1e" />
      <path d="M1942 1100L1930 1190L1919 1254" stroke="#3c0000" strokeWidth="24" filter="url(#b9)" />
      <path d="M1986 1192L2030 1196L2150 1228L2262 1256L2280 1270L2150 1238L2050 1212z" fill="#4a0000" filter="url(#b3)" />

      <path d="M2240 1262L2262 1258L2290 1180Q2290 1142 2326 1136Q2356 1140 2370 1166L2430 1164L2412 1350H2240z" fill="#f21c1e" filter="url(#b4)" />
      <path d="M2284 1274L2290 1184Q2292 1142 2326 1136Q2360 1140 2372 1172L2440 1168L2410 1352H2286z" fill="url(#postR)" />
      <path d="M2262 1264L2286 1272V1342L2262 1336z" fill="#f21c1e" filter="url(#b3)" />
      <path d="M2322 1128Q2280 1132 2272 1180L2258 1250" stroke="#8e0000" strokeWidth="13" filter="url(#b4)" />
      <path d="M2290 1172L2282 1258" stroke="#700000" strokeWidth="12" filter="url(#b4)" />
      <path d="M2208 1228Q2228 1234 2246 1236Q2250 1200 2260 1160" stroke="#ff6e70" strokeWidth="7" filter="url(#b4)" />
      <path d="M2378 1176L2430 1172L2620 1168" stroke="#3a0000" strokeWidth="12" filter="url(#b4)" />
      <path d="M2330 1128Q2358 1134 2366 1156" stroke="#ff7476" strokeWidth="8" filter="url(#b3)" />
      <ellipse cx="2327" cy="1168" rx="11" ry="15" fill="#ff8284" filter="url(#b4)" />

      <path d="M1685 772Q1740 790 1805 778L1870 770L1880 792" stroke="#8a0000" strokeWidth="7" filter="url(#b4)" />
      <path d="M1720 790L1802 799" stroke="#ff6264" strokeWidth="8" filter="url(#b4)" />
      <path d="M2084 848Q2230 900 2330 904L2376 896" stroke="#600000" strokeWidth="7" filter="url(#b4)" />
      <path d="M2640 955L2780 1008L2925 1040" stroke="#700000" strokeWidth="9" filter="url(#b4)" />
      <path d="M2935 1040Q2890 1120 2790 1150L2640 1166" stroke="#400000" strokeWidth="22" filter="url(#b9)" />
      <path d="M2730 1020Q2800 1030 2830 1044L2780 1080Q2720 1070 2730 1020z" fill="#ff3436" filter="url(#b18)" />
    </g>

    <path d="M1685 684L1716 691L1752 696L1793 697L1872 686L1882 682L1872 756Q1868 768 1803 774Q1740 778 1685 768z" fill="url(#collarL)" />
    <path d="M1685 626L1732 636L1779 647L1844 664Q1882 674 1882 682Q1880 686 1793 697Q1752 700 1685 684z" fill="#76203a" />
    <path d="M1685 653L1716 650L1778 657L1818 670L1826 675L1778 679L1732 677L1685 666z" fill="#1e1e1e" />
    <ellipse cx="1722" cy="687" rx="28" ry="5.500" fill="url(#bolt)" transform="rotate(6 1722 687)" />

    <path d="M2062 746L2051 825Q2052 835 2081 845L2150 867L2222 887Q2283 902 2329 901Q2374 897 2408 881L2413 872L2425 795z" fill="url(#collarM)" />
    <path d="M2062 746Q2066 737 2130 730Q2170 726 2252 743L2354 768Q2420 787 2425 795Q2424 805 2364 816Q2324 820 2252 804L2150 777z" fill="#7c3a02" />
    <path d="M2119 753Q2124 745 2160 745Q2211 748 2303 768Q2368 782 2370 787Q2362 795 2320 795Q2270 792 2227 781L2150 765Q2122 757 2119 753z" fill="#540000" />
    <ellipse cx="2295" cy="806" rx="29" ry="6.500" fill="url(#bolt)" transform="rotate(8 2295 806)" />
    <ellipse cx="2210" cy="738" rx="20" ry="4.500" fill="url(#bolt)" transform="rotate(10 2210 738)" />

    <path d="M2652 867L2639 951Q2660 962 2680 972L2775 1001L2850 1023L2916 1038Q2950 1042 2977 1041L3008 1020L3029 923z" fill="url(#collarR)" />
    <path d="M2652 869Q2652 858 2718 841Q2735 840 2869 869L2963 896Q3028 914 3029 923L2998 948Q2980 956 2926 948L2869 932L2728 890z" fill="#3c001c" />
    <path d="M2718 877Q2735 866 2803 873L2916 894L2968 911L2949 922L2907 921L2822 906L2751 888z" fill="#020202" />
    <ellipse cx="2924" cy="938" rx="29" ry="7" fill="url(#bolt)" transform="rotate(9 2924 938)" />
    <ellipse cx="2768" cy="851" rx="18" ry="4" fill="url(#bolt)" transform="rotate(9 2768 851)" />

    {inletArrows.map((p, i) => (
      <Arrow key={i} p={p} len={p[0] < 1900 ? 101 : 110} half={p[0] < 1900 ? 9 : 10.500} head={p[0] < 1900 ? 29 : 32} color="#1c1cf0" shaft="#1c1cae" />
    ))}

    <g>
      <path d="M2921 412L2941 360H2957L2937 412z" fill="#05070c" />
      <path d="M2959 361L2981 412H2966L2952 376z" fill="#05070c" />
      <text x="2980" y="412" fontFamily="Inter, sans-serif" fontWeight="700" fontSize="70" fill="#05070c">nsys</text>
      <text x="3009" y="458" fontFamily="Inter, sans-serif" fontWeight="800" fontSize="34" letterSpacing="-2" fill="#05070c">2022</text>
    </g>

    <g>
      <path d="M2996 1317L3029 1323L3024 1359L2995 1352z" fill="#eeeef8" stroke="#777" strokeWidth="1.200" />
      <path d="M3029 1323L3042 1321L3037 1355L3024 1359z" fill="#8c8c8c" />
      <path d="M2996 1317L3012 1314L3042 1321L3029 1323z" fill="#666" />
      <path d="M3013 1318q7-13 14 1q-7 5-14-1z" fill="#1fae2c" />
      <path d="M3007 1356q6 6 11 2" stroke="#2c6a30" strokeWidth="4" />
      <path d="M3021 1308L3025 1288" stroke="#22c436" strokeWidth="6" />
      <path d="M3019 1291L3026 1272L3030 1292z" fill="#22c436" />
      <text x="3018" y="1279" fontFamily="Liberation Sans, sans-serif" fontSize="20" fill="#2ee83a">Y</text>
      <circle cx="3052.500" cy="1302" r="8.500" fill="url(#cyan)" />
      <ellipse cx="3035" cy="1340" rx="5.500" ry="7.500" fill="#d81c20" />
      <path d="M3043 1342L3064 1346" stroke="#c81c20" strokeWidth="6" />
      <path d="M3062 1340L3076 1349L3060 1351z" fill="#c81c20" />
      <text x="3071" y="1360" fontFamily="Liberation Sans, sans-serif" fontSize="23" fill="#e04040">X</text>
      <text x="2983" y="1351" fontFamily="Liberation Sans, sans-serif" fontSize="22" fill="#1818a0">Z</text>
      <circle cx="2999" cy="1341" r="6" fill="#10109a" />
      <circle cx="3010" cy="1338" r="7" fill="#1414b8" />
      <path d="M3078 1382L3086 1356L3092 1346M3082 1384L3092 1360M3078 1382L3082 1384" stroke="#777" strokeWidth="1.200" />
      <path d="M3044 1408L3061 1398L3065 1402L3056 1408" stroke="#777" strokeWidth="1.200" />
    </g>
  </svg>
);

/* ---------- QR ---------- */

const FINDER = ['#######', '#.....#', '#.###.#', '#.###.#', '#.###.#', '#.....#', '#######'];
const qrCells: number[][] = [
  [9, 11, 14], [9, 10, 11, 12, 13, 15, 16, 17, 18], [8, 9, 12, 14], [8, 11, 14, 16, 18], [9, 12, 14, 18], [9, 11, 13, 15],
  [8, 10, 12, 14, 16, 18], [11, 12, 16, 18], [3, 4, 6, 7, 12, 14, 15, 16, 17, 18], [0, 1, 2, 3, 4, 5, 8, 10, 12, 13, 15, 16],
  [0, 3, 4, 5, 6, 11, 14, 15, 17], [1, 3, 4, 8, 11, 12, 13, 15, 16, 18], [1, 6, 8, 9, 14, 15, 16], [0, 1, 3, 4, 8, 10, 11, 12, 13, 14, 15, 17],
  [0, 1, 5, 6, 8, 9, 10, 11, 12, 13, 18], [2, 3, 5, 7, 8, 9, 11, 12, 14, 16, 18], [0, 1, 4, 5, 6, 7, 8, 9, 10, 15, 16, 18],
  [0, 1, 2, 8, 9, 11, 13, 14, 15], [3, 4, 6, 7, 8, 9, 13, 14, 16, 17], [1, 2, 3, 5, 7, 8, 9, 15, 17], [1, 3, 5, 6, 7, 10, 13, 17, 18],
  [0, 1, 2, 3, 9, 10, 12, 13, 14, 15, 16, 18], [0, 3, 6, 9, 12, 15, 18], [0, 8, 9, 10, 11, 13, 16, 17], [0, 1, 6, 8, 9, 13, 16],
  [8, 9, 12, 14, 15, 17], [8, 9, 10, 13, 15], [9, 10, 12, 15, 16], [8, 11, 12, 13, 16, 18], [8, 10, 11, 14, 16, 17, 18], [9, 10, 12],
  [13, 14, 15, 17, 18], [9, 11, 14],
];
const QrCode = () => {
  const w = 8.32;
  const h = 8.07;
  const dark: string[] = [];
  const add = (c: number, r: number) => dark.push(`M${(c * w).toFixed(1)} ${(r * h).toFixed(1)}h${w + 0.2}v${h + 0.2}h-${w + 0.2}z`);
  qrCells.forEach((cols, r) => cols.forEach(c => add(c, r)));
  FINDER.forEach((line, r) => line.split('').forEach((ch, c) => {
    if (ch === '#') {
      add(c, r);
      add(c, r + 26);
    }
  }));
  return (
    <svg width="165" height="267" viewBox="0 0 165 267">
      <path d={dark.join('')} fill="#000" />
    </svg>
  );
};

/* ---------- data ---------- */

const tabs: [string, number][] = [
  ['用户自定义', 201], ['求解', 200.6], ['结果', 200.6], ['查看', 200.6], ['并行', 200.6], ['设计', 200.6],
];
type LeafItem = { icon: string; label: string; plus?: boolean; on?: boolean; tight?: boolean };
const solveLeaves: LeafItem[] = [
  { icon: 'method', label: '方法' },
  { icon: 'control', label: '控制' },
  { icon: 'report', label: '报告定义', on: true },
  { icon: 'monitor', label: '计算监控', plus: true },
  { icon: 'cell', label: '单元标记' },
  { icon: 'adapt', label: '网格自适应' },
  { icon: 'init', label: '初始化' },
  { icon: 'gear', label: '计算设置', plus: true, tight: true },
  { icon: 'run', label: '运行计算' },
];
const resultLeaves: LeafItem[] = [
  { icon: 'surface', label: '表面' },
  { icon: 'graphics', label: '图形', plus: true, tight: true },
  { icon: 'plot', label: '绘图', plus: true },
  { icon: 'anim', label: '动画', plus: true },
  { icon: 'doc', label: '报告', plus: true },
];
const createMenu = ['表达式...', '表面报告', '体积报告', '力矩监控器', '通量报告', 'DPM报告', '用户自定义......'];
const surfaceMenu = [
  '面积...', '面积加权平均值...', '自定义矢量的通量...', '自定义矢量通量...', '自定义矢量加权平均数...', '小平面平均值...', '小平面最大值...',
  '小平面最小值...', '流率...', '积分...', '质量流率...', '质量加权平均...', '标准偏差......', '总计...', '均匀性指数-面积加权......',
  '均匀性指数-质量加权......', '节点平均......', '节点最大值......', '节点最大值......', '体积流率...',
];
const properties = ['名称', '报告类型', 'Field', '表面/区域名称', '每个表面/区域', '取平均值'];

const Root = ({ label, plus }: { label: string; plus?: boolean }) => (
  <RootRow>
    <Expander size={20} plus={plus} />
    <Song bold size={21.500} gap={1.700} color="#080808">{label}</Song>
  </RootRow>
);
const Leaves = ({ items }: { items: LeafItem[] }) => (
  <>
    {items.map(it => (
      <LeafRow key={it.label}>
        <ExpandSlot>{it.plus && <Expander size={27} plus />}</ExpandSlot>
        <Leaf $on={it.on} $tight={it.tight}>
          <Ico w={25} h={24}>{treeIcons[it.icon]}</Ico>
          <Song size={21.600} color="#22242a">{it.label}</Song>
        </Leaf>
      </LeafRow>
    ))}
  </>
);
const Cmd = ({ icon, label, color, gap, w, caret }: { icon: React.ReactNode; label: string; color?: string; gap?: number; w?: number; caret?: boolean }) => (
  <Command $gap={gap} $w={w}>
    {icon}
    <Song color={color}>{label}</Song>
    {caret && <CaretSlot><Triangle $color="#6a6a6a" /></CaretSlot>}
  </Command>
);
const Heading = ({ children }: { children: string }) => (
  <GroupTitle><Song bold size={22.300} gap={0.600} color="#222">{children}</Song></GroupTitle>
);

export default function App() {
  return (
    <Page>
      <Global />
      <TitleBar>
        <TitleIcon><FluentIcon /></TitleIcon>
        <TitleText>{'manifold Parallel Fluent@zhangyang.peraportal.com  [3d, dp, pbns, rke, single-process]'}</TitleText>
      </TitleBar>
      <MenuBar>
        <Tab $w={127}><Underlined><Song size={22.500} color="#d5deea">文件</Song></Underlined></Tab>
        <Tab $w={200}><Song size={22.500} color="#d5deea">域</Song></Tab>
        <Tab $w={201} $active><Song bold size={22.500} gap={0.500} color="#2c3c58">物理模型</Song></Tab>
        {tabs.map(([t, w]) => (
          <Tab key={t} $w={w}><Song size={22.500} gap={0.500} color="#d5deea">{t}</Song></Tab>
        ))}
        <Tab $w={50}><Triangle $up $color="#d5deea" /></Tab>
      </MenuBar>

      <Ribbon>
        <Group $w={353} $first>
          <Heading>求解器</Heading>
          <GroupBody $cols="154px 1fr" $rows="65px 65px">
            <BigCommand $pad={8} $shift={10}><ToolsIcon /><Song>通用...</Song></BigCommand>
            <Cmd icon={<ConditionsIcon />} label="工作条件..." />
            <Cmd icon={<ReferenceIcon />} label="参考值......" />
          </GroupBody>
        </Group>
        <Group $w={613}>
          <Heading>模型</Heading>
          <GroupBody $cols="98px 180px 180px 130px" $pad={14}>
            <Blank />
            <Command $gap={9}><Checkbox /><Song size={20} color="#555">能量</Song></Command>
            <Blank />
            <Cmd icon={<RadiationIcon />} label="辐射......" />
            <Cmd icon={<ExchangerIcon />} label="换热器..." />
            <Cmd icon={<ViscousIcon />} label="粘性......" color="#3018b0" />
            <Cmd icon={<MultiphaseIcon />} label="多相流..." />
            <Cmd icon={<SpeciesIcon />} label="组份......" />
            <Cmd icon={<DiscreteIcon />} label="离散相..." />
            <Cmd icon={<StructureIcon />} label="结构..." />
            <Cmd icon={<AcousticsIcon />} label="声学" w={124} caret />
            <Cmd icon={<MoreIcon />} label="更多" w={124} caret />
          </GroupBody>
        </Group>
        <Group $w={204}>
          <Heading>材料</Heading>
          <GroupBody>
            <BigCommand $pad={6} $shift={2}><FlaskIcon /><Song>创建/编辑...</Song></BigCommand>
          </GroupBody>
        </Group>
        <Group $w={211}>
          <Heading>区域</Heading>
          <GroupBody $pad={20}>
            <Cmd icon={<GridIcon kind="zone" />} label="单元区域" gap={10} />
            <Cmd icon={<GridIcon kind="boundary" />} label="边界" gap={10} />
            <Cmd icon={<GridIcon kind="profile" />} label="Profiles..." gap={8} />
          </GroupBody>
        </Group>
        <Group $w={488}>
          <Heading>特定模型</Heading>
          <GroupBody $cols="255px 1fr" $pad={20}>
            <Cmd icon={<DiscreteIcon />} label="离散相" w={232} caret />
            <Cmd icon={<RaysIcon />} label="DTRM射线..." color="#868686" />
            <Cmd icon={<BoltIcon />} label="薄壳导热管理器..." color="#868686" />
            <Cmd icon={<BoltIcon />} label="显式热耦合……" color="#868686" />
            <Blank />
            <Cmd icon={<BoltIcon on />} label="PCB模型……" />
          </GroupBody>
        </Group>
      </Ribbon>

      <Workspace>
        <Outline>
          <PanelHeader $tone="#eaebef" $pad={16} $h={39}>
            <Song bold size={22} gap={1} color="#5d6c84">概要视图</Song>
            <Spacer />
            <ChevronLeft />
          </PanelHeader>
          <WhiteRule />
          <Filter><Song size={21.300} color="#8b8b8b">过滤文本</Song></Filter>
          <Root label="设置" plus />
          <Root label="求解" />
          <Leaves items={solveLeaves} />
          <Root label="结果" />
          <Leaves items={resultLeaves} />
          <Root label="参数和定制" plus />
          <Root label="仿真报告" plus />
        </Outline>
        <TaskPanel>
          <PanelHeader $tone="#bdc0ca" $pad={14} $h={39}>
            <Song bold size={22} gap={1} color="#5d6c80">任务页面</Song>
            <Spacer />
            <FloatIcon />
            <ChevronLeft />
          </PanelHeader>
          <TaskBody><PeekButton /></TaskBody>
        </TaskPanel>
        <RightSide>
          <ViewRow>
            <ToolColumn>
              <DotGrip />
              <ToolButton><MeshBall /></ToolButton>
              <Spacer />
              <DotGrip $vertical />
            </ToolColumn>
            <Viewport><Scene /></Viewport>
          </ViewRow>
          <ConsoleHead><Song bold size={22} gap={1} color="#4a5568">控制台</Song></ConsoleHead>
          <ConsoleBody>
            <ConsoleLine $indent={78} $h={52}>parallel</ConsoleLine>
            <ConsoleLine $indent={305} $h={30}>meters.</ConsoleLine>
          </ConsoleBody>
        </RightSide>
      </Workspace>

      <Dialog>
        <DialogTitle>
          <FluentIcon />
          <MenuLabel color="#111">报告定义</MenuLabel>
          <Spacer />
          <Ico w={20} h={20}><path d="M1 1L19 19M19 1L1 19" stroke="#222" strokeWidth="2" /></Ico>
        </DialogTitle>
        <DialogContent>
          <LeftPane>
            <ListHead>
              <Song>报告定义 [0/0]</Song>
              <Spacer />
              <IconButton><ListCheck /></IconButton>
              <IconButton><ListCheck cross /></IconButton>
            </ListHead>
            <ListBox $h={186} $top={7} />
            <ButtonRow>
              <Button $w={102} $kind="primary" $pad={16}>
                <Song bold size={22}>创建</Song>
                <ButtonCaret><Triangle $color="#98a2b2" /></ButtonCaret>
              </Button>
              <Button $w={134} $pad={4}><Song bold size={22} color="#8c8c8c">Edit...</Song></Button>
              <Button $w={135} $pad={4}><Song bold size={22} color="#8c8c8c">Delete</Song></Button>
              <Button $w={72}><Song size={22.500} color="#777">计算</Song></Button>
            </ButtonRow>
            <Button $w={190} $top={19}>{null}</Button>
            <UsedIn><Song>U</Song></UsedIn>
            <ListBox $h={186} $top={0} />
            <Button $w={478} $top={10} $pad={4}><Song bold size={22} color="#8c8c8c">Edit...</Song></Button>
          </LeftPane>
          <RightPane>
            <Song bold size={22.300} gap={0.500} color="#33343c">报告定义属性</Song>
            <Properties>
              {properties.map(p => (
                <PropertyRow key={p}>
                  <Song>{p}</Song>
                  <Song>:</Song>
                </PropertyRow>
              ))}
            </Properties>
            <ActionStack>
              <Button $w={235}><Song size={22.500} color="#777">报告文件定义......</Song></Button>
              <Button $w={235}><Song size={22.500} color="#777">报告显示定义...</Song></Button>
            </ActionStack>
          </RightPane>
        </DialogContent>
        <DialogFooter>
          <Button $w={71} $kind="plain"><Song size={22.300} color="#333">关闭</Song></Button>
          <Button $w={72} $kind="plain"><Song size={22.300} color="#333">帮助</Song></Button>
        </DialogFooter>
        <Grip width="24" height="22" viewBox="0 0 24 22">
          <path d="M2 22L24 2M9 22L24 8M15 22L24 14" stroke="#aaa" strokeWidth="1.400" />
        </Grip>
      </Dialog>

      <PopupShadow $x={699} $y={713} $w={3} $h={34} />
      <PopupShadow $x={510} $y={1001} $w={182} $h={3} />
      <Popup $x={499} $y={706} $w={200} $h={296} $pad={1}>
        {createMenu.map((t, i) => (
          <MenuItem key={t} $on={i === 1} $pad={28} $ml={5} $mr={5}>
            <MenuLabel color={i === 5 ? '#929292' : undefined}>{t}</MenuLabel>
            {i > 0 && i < 6 && <SubArrow $off={i === 5} />}
          </MenuItem>
        ))}
      </Popup>
      <PopupShadow $x={988} $y={760} $w={3} $h={820} />
      <Popup $x={690} $y={748} $w={299} $h={830} $pad={5}>
        {surfaceMenu.map((t, i) => (
          <MenuItem key={i} $on={i === 1} $pad={28} $ml={6} $mr={8}>
            <MenuLabel>{t}</MenuLabel>
          </MenuItem>
        ))}
      </Popup>
      <Halo />
      <Tooltip><MenuLabel color="#44464e">面积加权平均值</MenuLabel></Tooltip>
      <Cursor width="24" height="36" viewBox="0 0 24 36">
        <path d="M2 2V26L8 21L12 31L16.500 29L12.500 19.500H20z" fill="#fff" stroke="#333" strokeWidth="1.800" />
      </Cursor>

      <BlankCover />
      <PickLabel><Song size={21.500}>选择</Song></PickLabel>
      <SiteBadge>
        <SiteName>超蓝<Registered>®</Registered>视频教程网站</SiteName>
        <SiteUrl>http://www.chaolan2020.com</SiteUrl>
      </SiteBadge>
      <QrCard><QrCode /></QrCard>
    </Page>
  );
}
